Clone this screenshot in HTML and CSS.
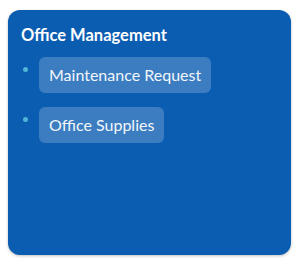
FILE: index.html
```html
<!DOCTYPE html>
<html lang="en">

<head>
    <meta charset="UTF-8">
    <meta name="viewport" content="width=device-width, initial-scale=1.0">
    <title>Office Management</title>
    <link rel="stylesheet" href="styles.css">
</head>

<body>
    <div class="card">
        <h2 class="card-title">Office Management</h2>
        <ul class="links">
            <li class="link-item">
                <span class="dot"></span>
                <a class="pill" href="#">Maintenance Request</a>
            </li>
            <li class="link-item">
                <span class="dot"></span>
                <a class="pill" href="#">Office Supplies</a>
            </li>
        </ul>
    </div>
</body>

</html>
```

FILE: styles.css
```css
body {
    margin: 0;
    padding: 10px 9px 12px 8px;
    background: #ffffff;
    font-family: Lato, "Noto Sans", sans-serif;
}

.card {
    height: 245px;
    box-sizing: border-box;
    padding: 15px 12px;
    background-color: #0b5db1;
    border-radius: 12px;
    box-shadow: 0 1px 3px rgba(0, 0, 0, 0.25);
    color: #ffffff;
}

.card-title {
    margin: 0;
    font-size: 16.5px;
    font-weight: 700;
    line-height: 20px;
    padding-left: 1px;
}

.links {
    list-style: none;
    margin: 12px 0 0;
    padding: 0;
    display: flex;
    flex-direction: column;
    gap: 14px;
}

.link-item {
    display: flex;
    align-items: flex-start;
}

.dot {
    width: 5px;
    height: 5px;
    border-radius: 50%;
    background-color: #4fb4d6;
    margin: 10px 11px 0 3px;
    flex: none;
}

.pill {
    display: inline-block;
    padding: 9px 10px;
    line-height: 18px;
    font-size: 16px;
    color: #f2f6fb;
    text-decoration: none;
    background-color: rgba(255, 255, 255, 0.2);
    border-radius: 6px;
}
```
